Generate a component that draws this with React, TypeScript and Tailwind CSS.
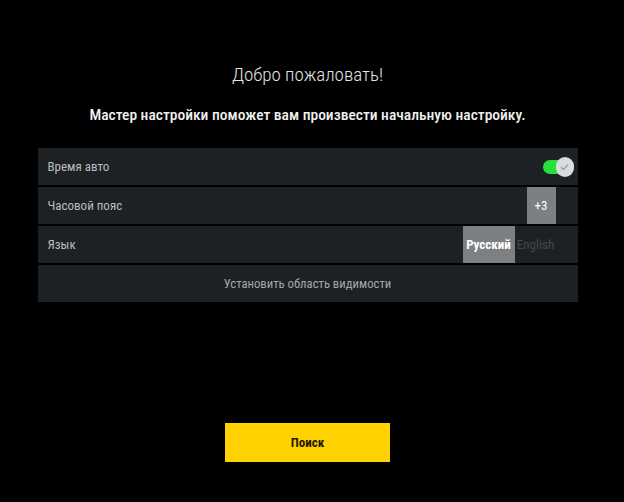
const font = "font-['Roboto_Condensed','Liberation_Sans_Narrow',sans-serif]";

function Toggle() {
  return (
    <div className="relative w-[31px] h-[20px] flex items-center">
      <div className="w-[22px] h-[14px] rounded-l-full bg-[#27e03c]" />
      <div className="absolute right-0 top-0 w-[18px] h-[20px] rounded-full bg-[#d9dcdc] flex items-center justify-center">
        <svg width="9" height="8" viewBox="0 0 9 8" fill="none">
          <path d="M1 4.2 L3.5 6.5 L8 1.5" stroke="#9aa0a0" strokeWidth="1.4" />
        </svg>
      </div>
    </div>
  );
}

export default function App() {
  return (
    <div className={`w-[624px] h-[502px] bg-black flex flex-col items-center pr-[9px] ${font}`}>
      {/* Header */}
      <h1 className="mt-[62px] h-[26px] leading-[26px] text-[19px] font-light text-[#e4e4e4]">
        Добро пожаловать!
      </h1>
      <p className="mt-[15px] h-[24px] leading-[24px] text-[15.5px] font-medium text-[#f0f0f0]">
        Мастер настройки поможет вам произвести начальную настройку.
      </p>

      {/* Settings */}
      <div className="mt-[21px] w-[540px] flex flex-col gap-[2px] text-[13px]">
        <div className="h-[37px] bg-[#1e2124] flex items-center justify-between pl-[10px] pr-[4px]">
          <span className="text-[#b9bcc0]">Время авто</span>
          <Toggle />
        </div>
        <div className="h-[37px] bg-[#1e2124] flex items-stretch justify-between pl-[10px] pr-[22px]">
          <span className="self-center text-[#b9bcc0]">Часовой пояс</span>
          <div className="w-[29px] bg-[#7c8083] text-white flex items-center justify-center">+3</div>
        </div>
        <div className="h-[37px] bg-[#1e2124] flex items-stretch pl-[10px] pr-[21px]">
          <span className="self-center text-[#b9bcc0]">Язык</span>
          <div className="ml-auto w-[52px] bg-[#7c8083] text-white font-bold flex items-center justify-center">
            Русский
          </div>
          <div className="w-[42px] text-[#44484b] flex items-center justify-center">English</div>
        </div>
        <div className="h-[37px] bg-[#1e2124] flex items-center justify-center text-[12.7px] text-[#a3a6aa]">
          Установить область видимости
        </div>
      </div>

      {/* Action */}
      <button className="mt-[121px] w-[165px] h-[39px] bg-[#ffd100] text-[#1f1a00] text-[13px] font-bold">
        Поиск
      </button>
    </div>
  );
}
